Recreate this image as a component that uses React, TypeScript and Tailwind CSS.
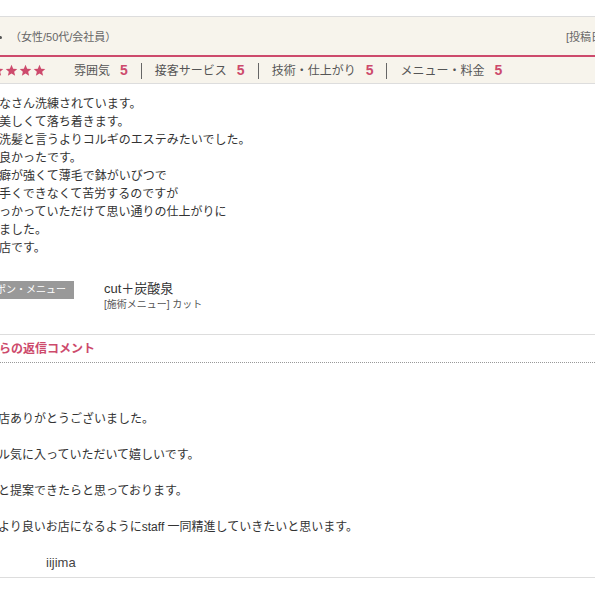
import React from "react";

const PINK = "#cd4a6c";

function Star() {
  return (
    <svg width="13" height="13" viewBox="0 0 24 24" className="shrink-0">
      <path
        d="M12 1.5l3.1 7.1 7.6.6-5.8 5 1.8 7.5L12 17.7l-6.7 4 1.8-7.5-5.8-5 7.6-.6z"
        fill={PINK}
      />
    </svg>
  );
}

const ratings = [
  { label: "雰囲気", score: 5 },
  { label: "接客サービス", score: 5 },
  { label: "技術・仕上がり", score: 5 },
  { label: "メニュー・料金", score: 5 },
];

const reviewLines = [
  "なさん洗練されています。",
  "美しくて落ち着きます。",
  "洗髪と言うよりコルギのエステみたいでした。",
  "良かったです。",
  "癖が強くて薄毛で鉢がいびつで",
  "手くできなくて苦労するのですが",
  "っかっていただけて思い通りの仕上がりに",
  "ました。",
  "店です。",
];

const replyLines = [
  "店ありがとうございました。",
  "",
  "ル気に入っていただいて嬉しいです。",
  "",
  "と提案できたらと思っております。",
  "",
  "より良いお店になるようにstaff 一同精進していきたいと思います。",
  "",
];

export default function App() {
  return (
    <div className="w-[595px] h-[595px] overflow-hidden bg-white pt-[16px] font-['Liberation_Sans','Noto_Sans_CJK_JP',sans-serif] text-[#333]">
      {/* header */}
      <div className="flex h-[41px] items-center border-t border-b-2 border-t-[#dddddd] border-b-[#cd4a6c] bg-[#f7f4ec] pt-[3px] text-[11px] text-[#666]">
        <div className="flex w-[566px] shrink-0 items-center">
          <span className="-ml-[1px] inline-block h-[3px] w-[3px] rounded-full bg-[#555]" />
          <span className="ml-[8px]">（女性/50代/会社員）</span>
        </div>
        <span className="whitespace-nowrap">[投稿日：2019/03/20]</span>
      </div>

      {/* ratings */}
      <div className="flex h-[27px] items-center border-b border-[#dddddd] bg-[#f7f4ec] pt-[1px]">
        <div className="-ml-[9px] flex gap-[1px]">
          <Star />
          <Star />
          <Star />
          <Star />
        </div>
        <div className="ml-[28px] flex items-center">
          {ratings.map((r, i) => (
            <div key={r.label} className="flex items-center">
              {i > 0 && <span className="mx-[13px] h-[16px] border-l border-[#666]" />}
              <span className="text-[12px] text-[#555]">{r.label}</span>
              <span className="ml-[10px] text-[14px] font-bold" style={{ color: PINK }}>
                {r.score}
              </span>
            </div>
          ))}
        </div>
      </div>

      {/* review body */}
      <div className="-ml-[1px] pt-[11px] text-[12px] leading-[18px] text-[#333]">
        {reviewLines.map((l, i) => (
          <p key={i} className="whitespace-nowrap">
            {l}
          </p>
        ))}
      </div>

      {/* menu */}
      <div className="mt-[24px] flex items-start">
        <div className="-ml-[46px] h-[18px] w-[120px] bg-[#999] pr-[8px] text-right text-[10px] leading-[18px] text-white whitespace-nowrap">
          クーポン・メニュー
        </div>
        <div className="ml-[30px]">
          <p className="text-[13px] leading-[16px] text-[#333]">cut＋炭酸泉</p>
          <p className="text-[10px] leading-[16px] text-[#555]">[施術メニュー] カット</p>
        </div>
      </div>

      {/* reply */}
      <div className="mt-[21px] border-t border-[#dddddd]">
        <div className="border-b border-dotted border-[#999] pt-[5px] pb-[4px]">
          <p className="-ml-[1px] text-[12px] font-bold leading-[18px]" style={{ color: PINK }}>
            らの返信コメント
          </p>
        </div>
        <div className="border-b border-[#dddddd] pt-[47px] pb-[5px]">
          <div className="-ml-[2px] text-[12px] leading-[18px] text-[#333]">
            {replyLines.map((l, i) => (
              <p key={i} className="h-[18px] whitespace-nowrap">
                {l}
              </p>
            ))}
          </div>
          <p className="ml-[46px] text-[13px] leading-[18px] text-[#444]">iijima</p>
        </div>
      </div>
    </div>
  );
}
